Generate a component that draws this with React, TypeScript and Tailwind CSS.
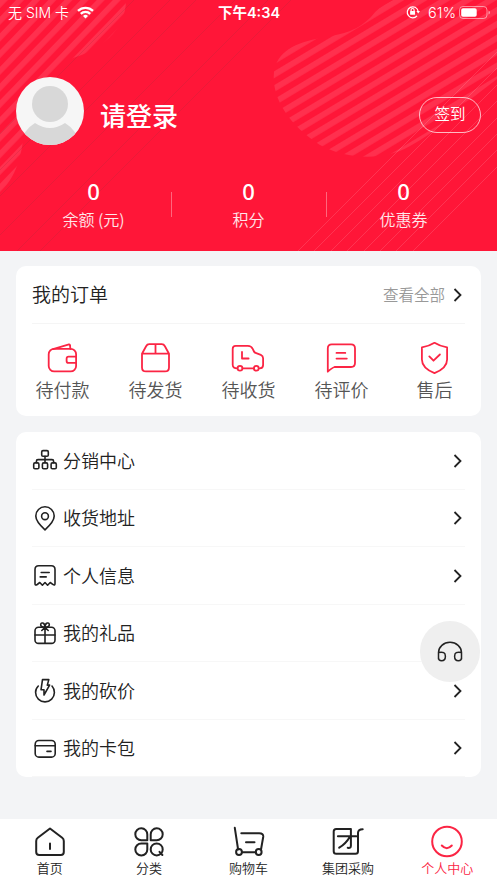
import type { ReactNode } from 'react'

const stats = [
  { value: 0, label: '余额 (元)' },
  { value: 0, label: '积分' },
  { value: 0, label: '优惠券' },
]

const orders = [
  {
    label: '待付款',
    icon: (
      <>
        <rect x="2.7" y="6.8" width="27.4" height="22.6" rx="5.5" />
        <path d="M7 7.2 23 2.4q1-.2 1 1L24.4 7M30 14.7h-7.4q-2 0-2 2v2.2q0 2 2 2H30" />
      </>
    ),
  },
  {
    label: '待发货',
    icon: (
      <path d="M3 11.7 7.1 4.2Q8.2 2.2 10.2 2.2h12.6q2 0 3.1 2L30 11.7v13.700q0 4-4 4H7q-4 0-4-4ZM3 11.700h27M16.500 2.400v9.300" />
    ),
  },
  {
    label: '待收货',
    icon: (
      <g transform="translate(-.7 0)">
        <path d="M6 26.3q-4.6 0-4.6-3.5V6.800q0-3 3-3h12.200q3.400 0 4.800 3l1.300 2.700q.5 1 1.600 1.400l5.200 2q2.300 1 2.300 3.300v6.800q0 3.300-3.400 3.300M11.300 26.300H22.600" />
        <path d="M10.7 10v6.500h6.600" />
        <circle cx="8.7" cy="26.3" r="2.4" />
        <circle cx="25" cy="26.3" r="2.4" />
      </g>
    ),
  },
  {
    label: '待评价',
    icon: <path d="M2.8 29.7V6.4q0-4 4-4H26q4 0 4 4V21q0 4-4 4H9.500q-2.500.8-6.700 4.700ZM11.500 10.900h8.800M11.500 16.600h10.300" />,
  },
  {
    label: '售后',
    icon: <path d="M16.500.8Q22 4.300 29.100 5.400V17.500Q29.100 26 16.500 31.200 3.900 26 3.900 17.500V5.400Q11 4.300 16.500.8ZM11.300 14.400l4.200 4.300 6.400-6.200" />,
  },
]

const menu = [
  {
    label: '分销中心',
    icon: (
      <>
        <rect x="9.7" y="2.6" width="6.6" height="5.6" rx="1.3" />
        <path d="M13 8.200v6.400M4.400 14.600v-1.400q0-1.600 1.600-1.600h14q1.600 0 1.600 1.600v1.400" />
        <rect x="1.7" y="14.9" width="5.2" height="5.9" rx="1.3" />
        <rect x="10.4" y="14.9" width="5.2" height="5.9" rx="1.3" />
        <rect x="19.1" y="14.9" width="5.2" height="5.9" rx="1.3" />
      </>
    ),
  },
  {
    label: '收货地址',
    icon: (
      <>
        <path d="M13 23.800Q3.800 15.500 3.800 10a9.200 9.200 0 0 1 18.400 0Q22.200 15.500 13 23.800Z" />
        <circle cx="13" cy="10.2" r="3.4" />
      </>
    ),
  },
  {
    label: '个人信息',
    icon: (
      <path d="M3 20.400V6.400Q3 2.700 6.700 2.700h12.600Q23 2.700 23 6.400v14q0 2.600-2.200 1L18.200 19.500l-2.600 2.700L13 19.500l-2.600 2.700-2.600-2.700L5.200 21.500Q3 23 3 20.400ZM9.200 9.500h8M8.200 13.900h6" />
    ),
  },
  {
    label: '我的礼品',
    icon: (
      <>
        <rect x="3" y="6.2" width="20" height="16.2" rx="3.5" />
        <path d="M3 14h20M13 6.200v16M13 6.200Q8.500 6 8.700 3.700 9 1.500 11 2.100 12.800 2.500 13 6.200 13.200 2.500 15 2.100 17 1.500 17.300 3.700 17.500 6 13 6.200ZM9.800 9.500 13 6.200 16.200 9.500" />
      </>
    ),
  },
  {
    label: '我的砍价',
    icon: (
      <>
        <path d="M6.300 8Q3.300 11 3.600 14.500a9.400 9.400 0 0 0 18.800 0Q22.600 11 20 8" />
        <path d="M10.500 1.600h6.300l-1.500 5.500h2.300L12 17v-5.200H9Z" />
      </>
    ),
  },
  {
    label: '我的卡包',
    icon: (
      <>
        <rect x="3.2" y="4.5" width="20" height="16.6" rx="3.7" />
        <path d="M3.200 9.700h20M15 15.400h4" />
      </>
    ),
  },
]

const tabs = [
  {
    label: '首页',
    icon: <path d="M16 3.500 28.200 12.800q1.600 1.200 1.600 3.100V27q0 3-3 3H5.200q-3 0-3-3V15.900q0-1.900 1.600-3.100ZM16 18.500v5.500" />,
  },
  {
    label: '分类',
    icon: (
      <>
        <path d="M14.300 15.300V9.400A6 6 0 1 0 8.300 15.300Z" />
        <path d="M17.700 15.300V9.400A6 6 0 1 1 23.700 15.300Z" />
        <path d="M14.300 18.500V24.400A6 6 0 1 1 8.300 18.500Z" />
        <circle cx="23.7" cy="24.4" r="6" />
        <path d="m26.500 26.800 2.900 3.200" />
      </>
    ),
  },
  {
    label: '购物车',
    icon: (
      <>
        <path d="M1.800 2.800 5.100 24.500M9 27.200H22.700M8.300 8.200H26.200Q30.700 8.200 30.200 12L28 24.500M13 17.300h8.500" />
        <circle cx="6" cy="27" r="2.9" />
        <circle cx="25.7" cy="27" r="2.9" />
      </>
    ),
  },
  {
    label: '集团采购',
    icon: (
      <path d="M18.900 4H4.200Q1.700 4 1.700 6.500V26.200Q1.700 28.700 4.200 28.700H23.500Q26 28.700 26 26.200V8Q26 4.200 30.700 4.200M5.900 11.200H24.300M18.900 4V20.800Q18.900 23.600 15.700 22.800M17.900 11.700Q14 18.500 7.200 22.700" />
    ),
  },
  {
    label: '个人中心',
    active: true,
    icon: (
      <>
        <circle cx="16" cy="16.5" r="14.8" />
        <path d="M10.800 20.500q5 5.300 10 0" />
      </>
    ),
  },
]

function Icon({ size, width, className, children }: { size: number; width: number; className?: string; children: ReactNode }) {
  return (
    <svg
      width={size}
      height={size}
      viewBox={`0 0 ${size} ${size}`}
      fill="none"
      stroke="currentColor"
      strokeWidth={width}
      strokeLinecap="round"
      strokeLinejoin="round"
      className={`shrink-0 overflow-visible ${className ?? ''}`}
    >
      {children}
    </svg>
  )
}

function Chevron() {
  return (
    <svg width="9" height="14" viewBox="0 0 9 14" fill="none" stroke="#222" strokeWidth="1.8" className="mr-[3px] mt-px shrink-0">
      <path d="m1.500 1 6 6-6 6" />
    </svg>
  )
}

function HeaderArt() {
  return (
    <svg width="497" height="251" viewBox="0 0 497 251" className="absolute inset-0">
      <defs>
        <pattern id="stripesLeft" width="11.6" height="11.6" patternUnits="userSpaceOnUse" patternTransform="rotate(-46)">
          <rect width="11.6" height="5.6" fill="#fff" />
        </pattern>
        <pattern id="stripesRight" width="11.9" height="11.9" patternUnits="userSpaceOnUse" patternTransform="rotate(-31)">
          <rect width="11.9" height="5.8" fill="#fff" />
        </pattern>
      </defs>
      <path d="M0 0H126Q126 25 103 43 90 53 73 58C55 68 33 95 25 125 22 150 20 172 0 193Z" fill="url(#stripesLeft)" opacity=".11" />
      <path
        d="M393 0Q378 7 371 17C355 33 340 34 322 38 295 42 277 52 274 72 271 100 292 127 320 145 347 160 385 161 410 146 437 132 460 108 480 92L497 79V0Z"
        fill="url(#stripesRight)"
        opacity=".11"
      />
      <g stroke="#9b2f3c" strokeWidth="1" opacity=".2">
        <path d="M134 0-50 184M170 0-50 220M196 0-55 251M235 0-16 251M268 0 17 251M291 0 40 251" />
      </g>
      <g stroke="#fff" strokeWidth="1" opacity=".13">
        <path d="M549 0 298 251M565 0 314 251M582 0 331 251M598 0 347 251M615 0 364 251M631 0 380 251M647 0 396 251M664 0 413 251" />
      </g>
    </svg>
  )
}

function StatusBar() {
  return (
    <div className="flex h-[26px] items-center pl-2 pr-[7px] font-[Inter,'Noto_Sans_CJK_SC',sans-serif] text-[14px]">
      <div className="flex flex-1 items-center gap-[8px]">
        <span className="-mt-[2px] whitespace-nowrap">无 SIM 卡</span>
        <svg width="17" height="13" viewBox="0 0 17 13" fill="none" stroke="#fff" strokeWidth="2.3" className="-mt-[2px]">
          <path d="M1 4.900a10.700 10.700 0 0 1 15 0M3.800 7.900a6.600 6.600 0 0 1 9.400 0" />
          <path d="m8.500 12.500-2.500-2.600a3.600 3.600 0 0 1 5 0Z" fill="#fff" stroke="none" />
        </svg>
      </div>
      <span className="text-[14.5px] font-semibold">下午4:34</span>
      <div className="-mt-px flex flex-1 items-center justify-end">
        <svg width="14" height="14" viewBox="0 0 14 14" fill="none" stroke="#fff" strokeWidth="1.2" className="-mt-px">
          <path d="M11 10.800A5.500 5.500 0 1 1 12.100 6" />
          <path d="M10.300 6h3.700l-1.800 2.500Z" fill="#fff" stroke="none" />
          <rect x="4.1" y="6.1" width="5" height="3.7" rx=".5" fill="#fff" stroke="none" />
          <path d="M5.100 6.500V5a1.500 1.500 0 0 1 3 0v1.500" />
        </svg>
        <span className="ml-[8px] mr-[3px] text-[14.5px]">61%</span>
        <svg width="31" height="13" viewBox="0 0 31 13" fill="none">
          <rect x=".5" y=".5" width="27.5" height="12" rx="3.5" stroke="#fff" strokeOpacity=".5" />
          <rect x="2.2" y="2.2" width="15.5" height="8.6" rx="1.8" fill="#fff" />
          <path d="M29.500 4.500v4q1.500-.4 1.500-2t-1.500-2" fill="#fff" fillOpacity=".5" />
        </svg>
      </div>
    </div>
  )
}

export default function App() {
  return (
    <div className="flex h-[883px] w-[497px] flex-col overflow-hidden bg-[#f3f4f6] font-['Noto_Sans_CJK_SC',sans-serif] font-[350] text-[#222]">
      <header className="relative h-[251px] shrink-0 overflow-hidden bg-[#ff1638] text-white">
        <HeaderArt />
        <div className="relative">
          <StatusBar />
          <div className="mt-[51px] flex h-[68px] items-center px-4">
            <svg width="68" height="68" viewBox="0 0 68 68">
              <defs>
                <clipPath id="avatar">
                  <circle cx="34" cy="34" r="34" />
                </clipPath>
              </defs>
              <g clipPath="url(#avatar)">
                <rect width="68" height="68" fill="#f6f6f6" />
                <circle cx="34" cy="27" r="18" fill="#d8d8d8" />
                <path d="M4 68Q7 53 19 46 34 56 49 46 61 53 64 68Z" fill="#d8d8d8" />
              </g>
            </svg>
            <h1 className="ml-4 mt-[7px] text-[26px] font-medium leading-none">请登录</h1>
            <button className="ml-auto mt-[7px] h-9 w-[62px] rounded-full border border-white/70 pb-px text-[15.5px] leading-none">签到</button>
          </div>
          <div className="mt-[32px] flex px-4">
            {stats.map((s, i) => (
              <div key={s.label} className="flex flex-1 items-center">
                <div className="flex-1 text-center">
                  <div className="font-['Noto_Sans',sans-serif] text-[22px] font-medium leading-[28px]">{s.value}</div>
                  <div className="mt-[2px] text-[16px] leading-[24px] text-white/90">{s.label}</div>
                </div>
                {i < 2 && <div className="-mr-px mt-px h-[25px] w-px bg-white/35" />}
              </div>
            ))}
          </div>
        </div>
      </header>

      <section className="mx-4 mt-[15px] h-[150px] shrink-0 rounded-[10px] bg-white">
        <div className="mx-4 flex h-[58px] items-center border-b border-[#f5f5f5]">
          <h2 className="mb-[2px] text-[19px] leading-none">我的订单</h2>
          <span className="ml-auto mr-[8px] text-[15.5px] leading-none text-[#999]">查看全部</span>
          <Chevron />
        </div>
        <div className="flex pt-[18px]">
          {orders.map((o) => (
            <div key={o.label} className="flex flex-1 flex-col items-center">
              <Icon size={33} width={1.8} className="text-[#fb2544]">
                {o.icon}
              </Icon>
              <span className="mt-px text-[18px] leading-[26px] text-[#555]">{o.label}</span>
            </div>
          ))}
        </div>
      </section>

      <section className="mx-4 mt-4 h-[345px] shrink-0 rounded-[10px] bg-white px-4">
        {menu.map((m) => (
          <div key={m.label} className="flex h-[57.5px] items-center border-b border-[#f7f7f7]">
            <Icon size={26} width={1.6} className="mt-[2px]">
              {m.icon}
            </Icon>
            <span className="mb-px ml-[5px] text-[18px] leading-none">{m.label}</span>
            <span className="ml-auto">
              <Chevron />
            </span>
          </div>
        ))}
      </section>

      <nav className="mt-auto flex h-16 shrink-0 bg-white pt-[6px]">
        {tabs.map((t) => (
          <div key={t.label} className={`flex flex-1 flex-col items-center ${t.active ? 'text-[#fb2544]' : ''}`}>
            <Icon size={32} width={2}>
              {t.icon}
            </Icon>
            <span className="mt-px text-[13px] leading-5">{t.label}</span>
          </div>
        ))}
      </nav>

      {/* customer service, floats above the list */}
      <button className="absolute left-[420px] top-[620.5px] flex h-[61px] w-[60px] items-center justify-center rounded-full bg-[#efefef]">
        <Icon size={26} width={1.5}>
          <path d="M1.500 21V14.600a11.500 10.300 0 0 1 23 0V21M1.500 14.500Q8.400 13 8.400 18.200 8.400 22.700 4.600 22.700 1.500 22.700 1.500 20M24.500 14.500Q17.600 13 17.600 18.200 17.600 22.700 21.400 22.700 24.500 22.700 24.500 20" />
        </Icon>
      </button>
    </div>
  )
}
